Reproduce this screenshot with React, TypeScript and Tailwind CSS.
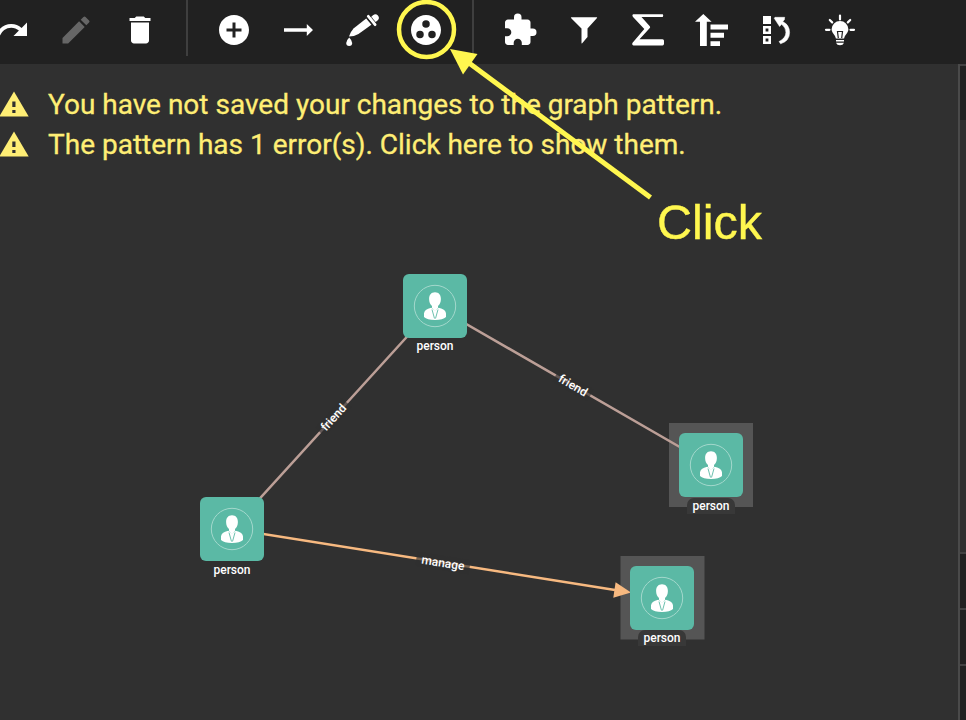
import React from "react";
import { MdRedo, MdEdit, MdDelete, MdAddCircle, MdGroupWork, MdExtension } from "react-icons/md";

function Slot({ children }: { children: React.ReactNode }) {
  return <div className="flex h-[60px] w-16 shrink-0 items-center justify-center">{children}</div>;
}

function Glyph({ children }: { children: React.ReactNode }) {
  return (
    <svg viewBox="0 0 36 36" className="size-9" fill="currentColor">
      {children}
    </svg>
  );
}

function Divider() {
  return <div className="mx-[14px] h-14 w-0.5 shrink-0 bg-[#3f3f3f]" />;
}

function Toolbar() {
  return (
    <header className="flex h-16 shrink-0 items-start overflow-hidden bg-[#212121] text-white">
      <div className="-ml-5 flex">
        <Slot><MdRedo className="size-9" /></Slot>
        <Slot><MdEdit className="size-9 text-[#666666]" /></Slot>
        <Slot><MdDelete className="size-9" /></Slot>
      </div>
      <Divider />
      <Slot><MdAddCircle className="size-9" /></Slot>
      <Slot>
        <Glyph><path d="M4 16.300H26.800V12L33 18l-6.200 6v-4.300H4z" /></Glyph>
      </Slot>
      <Slot>
        <Glyph>
          <path d="M5.200 25.500Q2.200 28.600 2.200 31a3 3 0 0 0 6 0q0-2.400-3-5.500z" />
          <path d="M5 24.600Q7 19 9.500 16.500L22.200 6.500l5.200 6.200L14.500 22Q10 24.500 5 24.600z" />
          <path d="m24.300 4.300 6.800 8.400" stroke="currentColor" strokeWidth="2.800" strokeLinecap="round" />
          <path d="M26.600 5.200 29 3.200a3.400 3.400 0 1 1 4.500 5.300l-2.400 2z" />
          <path d="m22.600 5.200 6.400 7.900M26.300 3.800l6 7.400" stroke="#212121" strokeWidth=".7" />
        </Glyph>
      </Slot>
      <Slot><MdGroupWork className="size-9" /></Slot>
      <Divider />
      <Slot><MdExtension className="size-9" /></Slot>
      <Slot>
        <Glyph><path d="M5.500 5.200h25.200q.8 0 .3.700L21.500 16.500V25l-5.300 6.300q-.7.500-.7-.3V16.500L5 5.900q-.5-.7.500-.7z" /></Glyph>
      </Slot>
      <Slot>
        <Glyph><path d="M3.200 2.200h29.300q.7 0 .7 1.400t-.7 1.400H11.500l8.300 9.300q.7.900 0 1.800L9.500 27.200h23q1.500 0 1.500 1.500v2.800q0 1.900-1.500 1.900h-29q-1.300 0-1.300-1.400 0-1 .8-1.700L14.300 17 2.800 4.800Q1.700 2.500 3.200 2.200z" /></Glyph>
      </Slot>
      <Slot>
        <Glyph>
          <path d="M1 9.700 9.300 2l8.300 7.700h-4.800V34H6V9.700zM16.500 12.600H34v5H16.500zM16.500 20.700H30v5H16.500zM16.500 29.200H26V34h-9.500z" />
        </Glyph>
      </Slot>
      <Slot>
        <Glyph>
          <path d="M5 4h8v8H5z" />
          <path d="M6.300 15.300h5.400v5.400H6.300zM6.300 25.300h5.400v5.400H6.300z" fill="none" stroke="currentColor" strokeWidth="2.600" />
          <path d="m16.200 6.200.8-.9h9.700l-.4 2.700-1.600 1.500Q31.600 13 31.600 20.500q0 8.500-9 11.300l-1.600-2.200q7-3.600 6.900-9.300 0-4.500-4.300-8l-2 2.200z" stroke="currentColor" strokeWidth=".5" strokeLinejoin="round" />
        </Glyph>
      </Slot>
      <Slot>
        <Glyph>
          <path d="M18 9a8.300 8.300 0 0 0-8.400 8.300c0 3.500 3.400 5.200 4.300 9.200h8.200c.9-4 4.300-5.700 4.300-9.200A8.300 8.300 0 0 0 18 9z" />
          <path d="M16.300 26l-.8-6.500h5l-.8 6.500" fill="none" stroke="#212121" strokeWidth="1.200" />
          <path d="M14 28h8v1.500h-8zM14 30.700h8q-1 2.500-4 2.500t-4-2.500z" />
          <path d="M18 3.500v4M4 17.800h3.500M28.500 17.800H32M7.800 8l2.400 2.400M28.200 8l-2.400 2.400" stroke="currentColor" strokeWidth="2.200" strokeLinecap="round" />
        </Glyph>
      </Slot>
    </header>
  );
}

function Warning({ children }: { children: React.ReactNode }) {
  return (
    <div className="flex h-10 items-center text-[#ffee75]">
      <svg viewBox="0 0 30 26" className="mr-[18px] h-[26px] w-[30px]">
        <path d="M14 .5 28.700 25.500H-.7z" fill="currentColor" />
        <path d="M12.300 10.500h3.200v5.500h-3.200zM12.300 19h3.200v3h-3.200z" fill="#303030" />
      </svg>
      <span className="mt-0.5 whitespace-nowrap text-[28px] leading-10 [-webkit-text-stroke:0.3px_#ffee75]">{children}</span>
    </div>
  );
}

type PersonProps = { x: number; y: number; labelOffset?: string; selected?: boolean };

function Person({ x, y, selected, labelOffset = "-mt-[9px]" }: PersonProps) {
  return (
    <div className="absolute flex w-[84px] flex-col items-center" style={{ left: x - 42, top: y - 42 }}>
      <div className="flex size-[84px] shrink-0 items-center justify-center">
        <svg viewBox="0 0 64 64" className="size-16 rounded-[6px] bg-[#5bb9a5]">
          <circle cx="32" cy="32" r="20.700" fill="none" stroke="#a3d8cc" strokeWidth="1" />
          <path d="M32 18.300c-3.900 0-5.900 2.800-5.900 6.700 0 3 1.200 5.700 2.900 7.100v2l3 3 3-3v-2c1.700-1.400 2.900-4.100 2.900-7.100 0-3.900-2-6.700-5.900-6.700z" fill="white" />
          <path d="M28.300 33.700Q21 35.500 21 39.500V43q3 3 11 3t11-3v-3.500q0-4-7.300-5.800L32 36.500z" fill="white" />
          <path d="m29 35.500 2.500 9M35 35.500l-2.500 9" stroke="#5bb9a5" strokeWidth=".9" />
        </svg>
      </div>
      <div className={`${labelOffset} flex h-4 w-12 items-center justify-center rounded-t-[7px] text-[12px] font-medium leading-4 text-white ${selected ? "bg-[#383838]" : ""}`}>
        person
      </div>
    </div>
  );
}

function Edges() {
  return (
    <svg className="absolute inset-0 h-[656px] w-[958px]" viewBox="0 64 958 656" fill="none">
      <g fill="#555555">
        <rect x="669" y="423" width="84" height="84" />
        <rect x="620.500" y="556" width="84" height="83.500" />
      </g>
      <g stroke="#bc9f97" strokeWidth="2.500">
        <path d="M434 307 233 528M435 306 711 465" />
      </g>
      <path d="M232 529 615 590" stroke="#f7b980" strokeWidth="2.500" />
      <path d="m631 592.500-17.700 5.300 2.300-15.500z" fill="#f7b980" />
      <g fill="#303030" fillOpacity=".65">
        <rect x="-20" y="-7" width="40" height="14" transform="translate(333.500 417.500) rotate(-47.700)" />
        <rect x="-20" y="-7" width="40" height="14" transform="translate(573 385.500) rotate(30)" />
        <rect x="-27" y="-7" width="54" height="14" transform="translate(443 563) rotate(9)" />
      </g>
      <g fill="white" fontSize="12" fontWeight="500" textAnchor="middle">
        <text y="4" transform="translate(333.500 417.500) rotate(-47.700)">friend</text>
        <text y="4" transform="translate(573 385.500) rotate(30)">friend</text>
        <text y="4" transform="translate(443 563) rotate(9)">manage</text>
      </g>
    </svg>
  );
}

function SidePanel() {
  return (
    <aside className="flex w-2 shrink-0 flex-col border-l-2 border-[#4a4a4a]">
      <div className="h-14 shrink-0 border-t-2 border-[#424242] bg-[#212121]" />
      <div className="h-[432px] shrink-0" />
      <div className="h-14 shrink-0 border-t-2 border-[#424242] bg-[#212121]" />
      <div className="h-14 shrink-0 border-t-2 border-[#424242] bg-[#212121]" />
      <div className="flex-1 border-t-2 border-[#424242] bg-[#212121]" />
    </aside>
  );
}

function ClickHint() {
  return (
    <div className="pointer-events-none absolute inset-0">
      <svg viewBox="0 0 966 720" className="absolute inset-0 h-[720px] w-[966px]">
        <circle cx="426.500" cy="29.500" r="27.500" fill="none" stroke="#fff74f" strokeWidth="4.500" />
        <path d="M465 60 650.500 197.500" stroke="#fff74f" strokeWidth="5" />
        <path d="m450 49 27.500 5L463 74.500z" fill="#fff74f" />
      </svg>
      <span className="absolute left-[657px] top-[195px] font-['Liberation_Sans',sans-serif] text-[48.5px] leading-[54px] text-[#fff74f] [-webkit-text-stroke:0.4px_#fff74f]">Click</span>
    </div>
  );
}

export default function App() {
  return (
    <div className="relative flex h-[720px] w-[966px] flex-col overflow-hidden bg-[#303030] font-[Roboto,sans-serif]">
      <Toolbar />
      <div className="flex min-h-0 flex-1">
        <main className="relative min-w-0 flex-1 overflow-hidden pt-5">
          <Warning>You have not saved your changes to the graph pattern.</Warning>
          <Warning>The pattern has 1 error(s). Click here to show them.</Warning>
          <Edges />
          <Person x={435} y={242} labelOffset="-mt-[10px]" />
          <Person x={232} y={465} />
          <Person x={711} y={401} selected />
          <Person x={662} y={533.5} labelOffset="-mt-[9.5px]" selected />
        </main>
        <SidePanel />
      </div>
      <ClickHint />
    </div>
  );
}
